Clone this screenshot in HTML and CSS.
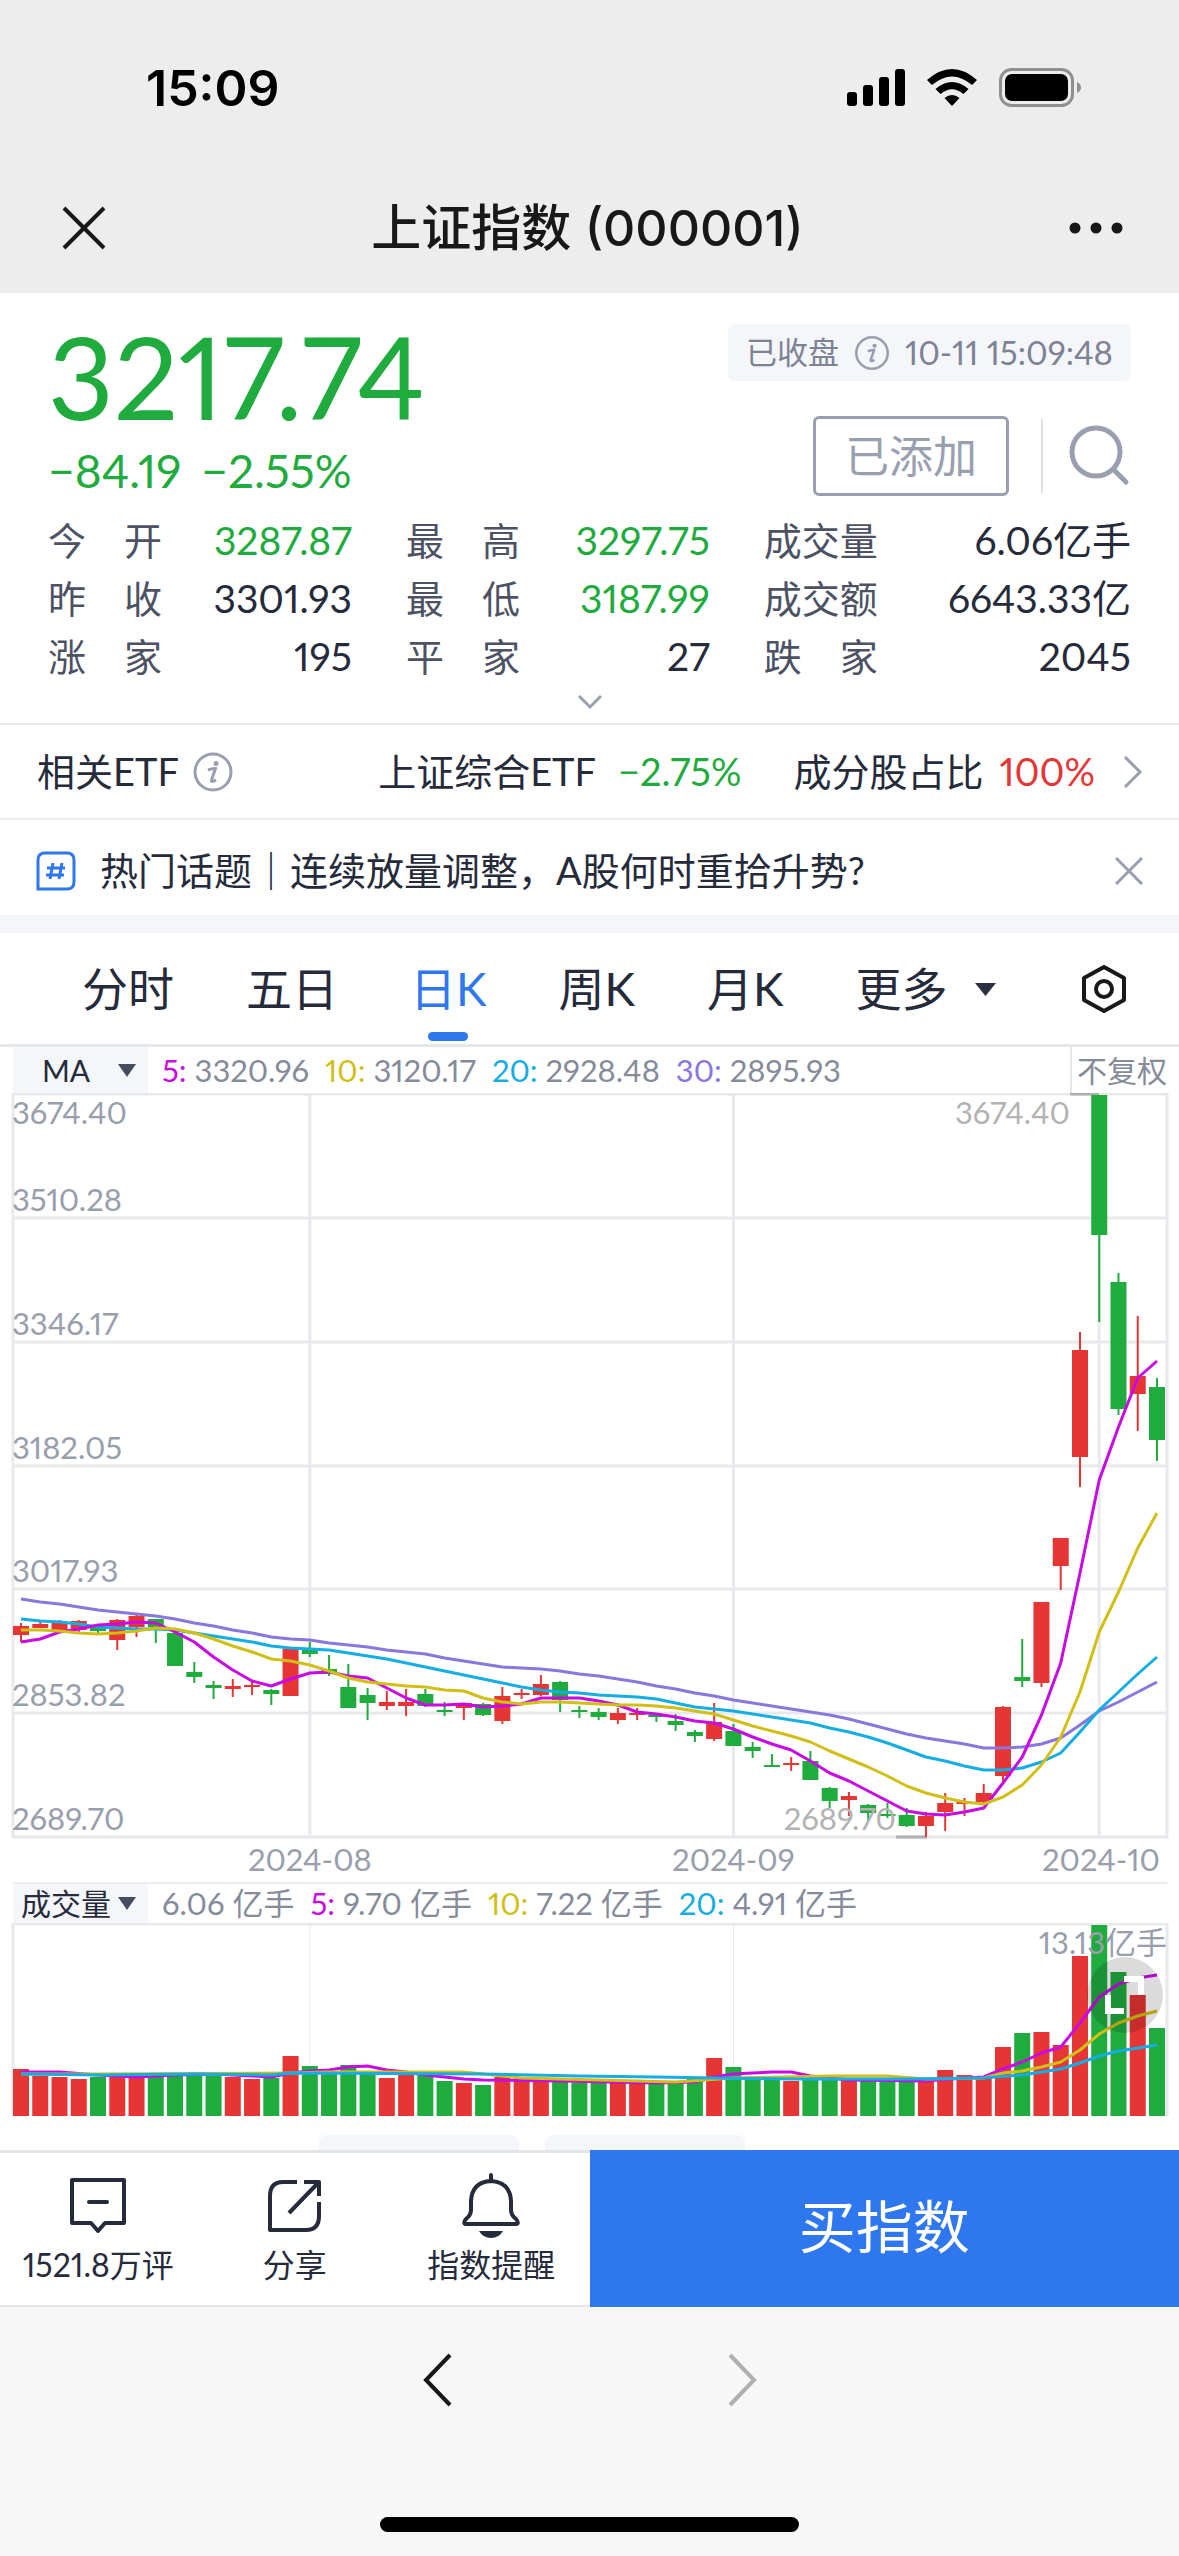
FILE: index.html
```html
<!DOCTYPE html>
<html lang="zh-CN">
<head>
<meta charset="utf-8">
<meta name="viewport" content="width=device-width, initial-scale=1">
<title>上证指数 (000001)</title>
<link rel="stylesheet" href="styles.css">
</head>
<body>
<header class="top">
  <div class="status">
    <span class="status-time">15:09</span>
    <div class="status-icons">
      <svg width="58" height="38" viewBox="0 0 58 38"><rect x="0" y="23" width="10" height="14" rx="3"/><rect x="16" y="16" width="10" height="21" rx="3"/><rect x="32" y="8" width="10" height="29" rx="3"/><rect x="48" y="0" width="10" height="37" rx="3"/></svg>
      <svg width="50" height="38" viewBox="0 0 50 38"><path d="M0 11Q25 -11 50 11L45 16Q25 -1 5 16Z"/><path d="M8.500 20Q25 6 41.500 20L36.500 25Q25 15.500 13.500 25Z"/><path d="M17.500 29Q25 23 32.500 29L25 37Z"/></svg>
      <svg width="82" height="40" viewBox="0 0 82 40"><rect x="1.500" y="1.500" width="72" height="36" rx="11" fill="none" stroke="#8f8f8f" stroke-width="3"/><rect x="6" y="6" width="63" height="27" rx="7"/><path d="M78 14Q82 16 82 19.500T78 25Z" fill="#8f8f8f"/></svg>
    </div>
  </div>
  <div class="nav">
    <button class="icon-btn" aria-label="关闭"><svg width="44" height="44" viewBox="0 0 44 44" class="stroke-dark"><path d="M2 2L42 42M42 2L2 42"/></svg></button>
    <h1 class="nav-title">上证指数 (000001)</h1>
    <button class="icon-btn" aria-label="更多操作"><svg width="54" height="12" viewBox="0 0 54 12" fill="#181818"><circle cx="6" cy="6" r="5.500"/><circle cx="27" cy="6" r="5.500"/><circle cx="48" cy="6" r="5.500"/></svg></button>
  </div>
</header>

<main class="page">
  <section class="quote">
    <div class="quote-head">
      <div>
        <div class="price">3217.74</div>
        <div class="change"><span>−84.19</span><span>−2.55%</span></div>
      </div>
      <div class="quote-side">
        <div class="market-state">
          <span>已收盘</span>
          <svg width="34" height="34" viewBox="0 0 40 40" class="info"><circle cx="20" cy="20" r="18.500"/><circle cx="23" cy="11.500" r="2.500" class="info-fill"/><path d="M15 18Q21 16 22.500 16.500L18.500 28Q18 31 23 28" /></svg>
          <time>10-11 15:09:48</time>
        </div>
        <div class="actions">
          <button class="added">已添加</button>
          <button class="search" aria-label="搜索"><svg width="62" height="62" viewBox="0 0 62 62"><circle cx="27" cy="27" r="24"/><path d="M45 45L57 57"/></svg></button>
        </div>
      </div>
    </div>
    <dl class="stats">
      <div><dt>今开</dt><dd class="down">3287.87</dd></div>
      <div><dt>最高</dt><dd class="down">3297.75</dd></div>
      <div><dt>成交量</dt><dd>6.06亿手</dd></div>
      <div><dt>昨收</dt><dd>3301.93</dd></div>
      <div><dt>最低</dt><dd class="down">3187.99</dd></div>
      <div><dt>成交额</dt><dd>6643.33亿</dd></div>
      <div><dt>涨家</dt><dd>195</dd></div>
      <div><dt>平家</dt><dd>27</dd></div>
      <div><dt>跌家</dt><dd>2045</dd></div>
    </dl>
    <button class="expand" aria-label="展开"><svg width="26" height="16" viewBox="0 0 26 16"><path d="M2 2L13 13L24 2"/></svg></button>
  </section>

  <a class="etf" href="#etf">
    <span class="etf-name">相关ETF</span>
    <svg width="40" height="40" viewBox="0 0 40 40" class="info"><circle cx="20" cy="20" r="18"/><circle cx="23" cy="11.500" r="2.500" class="info-fill"/><path d="M15 18Q21 16 22.500 16.500L18.500 28Q18 31 23 28"/></svg>
    <span class="etf-fund">上证综合ETF</span><span class="etf-change down">−2.75%</span>
    <span class="etf-share">成分股占比</span><span class="etf-pct up">100%</span>
    <svg width="20" height="34" viewBox="0 0 20 34" class="stroke-gray"><path d="M2 2L17 17L2 32"/></svg>
  </a>

  <div class="topic">
    <svg width="40" height="40" viewBox="0 0 40 40" class="hash"><path d="M9 2H31Q38 2 38 9V31Q38 38 31 38H2V9Q2 2 9 2Z"/><path d="M17 12L14 28M26 12L23 28M11 17H29M10 24H28"/></svg>
    <a class="topic-text" href="#topic">热门话题｜连续放量调整，A股何时重拾升势?</a>
    <button class="icon-btn" aria-label="关闭话题"><svg width="28" height="28" viewBox="0 0 28 28" class="stroke-gray"><path d="M1 1L27 27M27 1L1 27"/></svg></button>
  </div>

  <nav class="tabs" aria-label="周期">
    <button class="tab">分时</button>
    <button class="tab">五日</button>
    <button class="tab tab-on">日K</button>
    <button class="tab">周K</button>
    <button class="tab">月K</button>
    <button class="tab tab-more">更多<svg width="21" height="14" viewBox="0 0 21 14"><path d="M0 1H21L10.500 14Z" fill="#2a2f40"/></svg></button>
    <button class="icon-btn tab-settings" aria-label="设置"><svg width="46" height="48" viewBox="0 0 46 48" class="stroke-dark"><path d="M23 2L43 13V35L23 46L3 35V13Z" stroke-linejoin="round"/><circle cx="23" cy="24" r="8"/></svg></button>
  </nav>

  <section class="panel" aria-label="K线图">
    <div class="legend">
      <div class="picker"><select aria-label="主图指标"><option>MA</option></select><svg width="18" height="13" viewBox="0 0 18 13"><path d="M0 0H18L9 13Z"/></svg></div>
      <div class="legend-values">
        <span><b class="c5">5:</b> 3320.96</span><span><b class="c10">10:</b> 3120.17</span><span><b class="c20">20:</b> 2928.48</span><span><b class="c30">30:</b> 2895.93</span>
      </div>
      <button class="adjust">不复权</button>
    </div>
    <svg id="price" class="chart" viewBox="0 -1 1179 789" role="img" aria-label="日K线"></svg>
    <div class="legend legend-volume">
      <div class="picker"><select aria-label="副图指标"><option>成交量</option></select><svg width="18" height="13" viewBox="0 0 18 13"><path d="M0 0H18L9 13Z"/></svg></div>
      <div class="legend-values">
        <span>6.06 亿手</span><span><b class="c5">5:</b> 9.70 亿手</span><span><b class="c10">10:</b> 7.22 亿手</span><span><b class="c20">20:</b> 4.91 亿手</span>
      </div>
    </div>
    <div class="volume">
      <svg id="volume" class="chart" viewBox="0 -1 1179 194" role="img" aria-label="成交量"></svg>
      <button class="fullscreen" aria-label="全屏"><svg width="76" height="76" viewBox="0 0 76 76"><path d="M37 22H54V38M21 38V54H37"/></svg></button>
    </div>
    <div class="chips"><span></span><span></span></div>
  </section>
</main>

<footer>
  <div class="dock">
    <div class="dock-items">
      <button class="dock-item"><svg width="64" height="68" viewBox="0 0 64 68"><path d="M6 8H58V51H39L32 59L25 51H6Z"/><path d="M23 30H41" stroke-linecap="round"/></svg>1521.8万评</button>
      <button class="dock-item"><svg width="64" height="68" viewBox="0 0 64 68"><path d="M34 10H20Q7 10 7 24V58H43Q56 58 56 44V30M41 10H56V24M56 10L26 41" stroke-linecap="butt"/></svg>分享</button>
      <button class="dock-item"><svg width="64" height="68" viewBox="0 0 64 68"><path d="M32 3V9" stroke-linecap="round"/><path d="M32 9Q51 10 52 29V38Q52 43 57 47Q61 52 56 52H8Q3 52 7 47Q12 43 12 38V29Q13 10 32 9Z"/><path d="M20 59H44Q40 66 32 66T20 59Z" class="clapper"/></svg>指数提醒</button>
    </div>
    <button class="buy">买指数</button>
  </div>
  <div class="history">
    <button class="icon-btn" aria-label="后退"><svg width="30" height="54" viewBox="0 0 30 54" class="stroke-dark"><path d="M27 2L3 27L27 52"/></svg></button>
    <button class="icon-btn" aria-label="前进" disabled><svg width="30" height="54" viewBox="0 0 30 54" class="stroke-off"><path d="M3 2L27 27L3 52"/></svg></button>
  </div>
  <div class="home-bar"></div>
</footer>
<script src="chart.js"></script>
</body>
</html>
```
FILE: styles.css
```css
* { box-sizing: border-box; }

body {
  margin: 0;
  min-height: 100vh;
  display: flex;
  flex-direction: column;
  background: #f7f7f7;
  color: #262b3b;
  font-family: Lato, "Noto Sans CJK SC", sans-serif;
  font-size: 38px;
  font-variant-numeric: proportional-nums;
}

button, select {
  margin: 0;
  padding: 0;
  border: 0;
  background: none;
  color: inherit;
  font: inherit;
}
a { color: inherit; text-decoration: none; }
svg { display: block; flex: none; }

.icon-btn { display: flex; align-items: center; justify-content: center; }
.up { color: #e63535; }
.down { color: #1fab3e; }
.stroke-dark, .stroke-gray, .stroke-off { fill: none; stroke: #181818; stroke-width: 4; }
.stroke-gray { stroke: #9a9fb0; stroke-width: 3; }
.stroke-off { stroke: #b0b0b0; }

.top { background: #ededed; color: #000; font-family: Inter, "Noto Sans CJK SC", sans-serif; }
.status {
  display: flex;
  align-items: center;
  justify-content: space-between;
  padding: 58px 98px 44px 146px;
  font-size: 50px;
  font-weight: 600;
  line-height: 60px;
}
.status-icons { display: flex; align-items: center; gap: 22px; }
.nav {
  display: flex;
  align-items: center;
  justify-content: space-between;
  padding: 36px 56px 35px 62px;
  line-height: 60px;
}
.nav-title { margin: 0; font-size: 50px; font-weight: 500; color: #181818; }

.page { background: #fff; }

.quote { padding: 31px 48px 4px 48px; border-bottom: 2px solid #e9eaee; }
.quote-head { display: flex; justify-content: space-between; }
.price { color: #1fab3e; font-size: 114px; line-height: 104px; }
.change {
  display: flex;
  gap: 20px;
  margin-top: 18px;
  color: #1fab3e;
  font-size: 46px;
  line-height: 50px;
}
.quote-side { display: flex; flex-direction: column; align-items: flex-end; gap: 35px; }
.market-state {
  display: flex;
  align-items: center;
  gap: 16px;
  padding: 0 18px;
  border-radius: 6px;
  background: #f4f6fa;
  color: #7d8294;
  font-size: 31px;
  line-height: 57px;
}
.market-state time { font-size: 33px; }
.info { fill: none; stroke: #9a9fb0; stroke-width: 3; }
.info-fill { fill: #9a9fb0; stroke: none; }
.actions { display: flex; align-items: center; }
.added {
  width: 196px;
  height: 80px;
  border: 3px solid #9a9fb0;
  border-radius: 6px;
  color: #9a9fb0;
  font-size: 44px;
  line-height: 70px;
}
.search { margin-left: 32px; padding: 6px 0 6px 26px; border-left: 2px solid #dfe1e8; }
.search svg { fill: none; stroke: #9a9fb0; stroke-width: 5; stroke-linecap: round; }

.stats {
  display: grid;
  grid-template-columns: 303fr 303fr 366fr;
  column-gap: 54px;
  margin: 15px 0 0;
  font-size: 38px;
  line-height: 58px;
}
.stats div { display: flex; justify-content: space-between; }
.stats dt { width: 114px; color: #4c5264; text-align: justify; text-align-last: justify; }
.stats dd { margin: 0; font-size: 39px; }
.expand { display: flex; align-items: center; justify-content: center; width: 100%; height: 34px; }
.expand svg { fill: none; stroke: #9a9fb0; stroke-width: 3; }

.etf {
  display: flex;
  align-items: center;
  padding: 0 36px 0 37px;
  border-bottom: 2px solid #eceef2;
  line-height: 93px;
}
.etf-name { margin-right: 14px; }
.etf-fund { margin-left: auto; }
.etf-change { margin: 0 52px 0 22px; }
.etf-pct { margin: 0 28px 0 16px; }

.topic {
  display: flex;
  align-items: center;
  padding: 6px 36px 0;
  border-bottom: 18px solid #f5f6f9;
  line-height: 89px;
}
.hash { margin-right: 24px; fill: none; stroke: #2f77ee; stroke-width: 3; }
.topic-text { flex: 1; }

.tabs {
  display: flex;
  align-items: center;
  gap: 72px;
  padding: 0 52px 0 82px;
  border-bottom: 3px solid #e6e7ea;
  font-size: 46px;
  line-height: 111px;
}
.tab-on { position: relative; color: #2f77ee; }
.tab-on::after {
  content: "";
  position: absolute;
  left: calc(50% - 20px);
  bottom: 3px;
  width: 40px;
  height: 9px;
  border-radius: 5px;
  background: #2f77ee;
}
.tab-more { display: flex; align-items: center; gap: 28px; }
.tab-settings { margin-left: auto; }

.legend {
  display: flex;
  margin: 0 12px 0 13px;
  color: #868b9a;
  font-size: 31px;
  line-height: 46px;
}
.legend b { font-weight: 400; }
.picker { display: grid; align-items: center; width: 135px; background: #f4f6fa; color: #262b3b; font-size: 30px; }
.picker select {
  grid-area: 1 / 1;
  width: 100%;
  padding-right: 29px;
  appearance: none;
  text-align: center;
  text-align-last: center;
}
.picker svg { grid-area: 1 / 1; justify-self: end; margin-right: 12px; fill: #464d60; pointer-events: none; }
.legend-values { display: flex; flex: 1; gap: 16px; padding-left: 14px; white-space: pre; }
.c5 { color: #c80be3; }
.c10 { color: #d2bf16; }
.c20 { color: #14ade4; }
.c30 { color: #8a76dd; }
.adjust { padding-left: 5px; border-left: 2px solid #e6e7ea; font-size: 30px; }
.legend-volume { border-top: 2px solid #ecedf0; line-height: 39px; }

.chart { width: 100%; height: auto; }
.grid { fill: none; stroke: #e8e9ec; stroke-width: 3; }
.thin { stroke-width: 1; }
.mark { stroke: #b0b0b0; stroke-width: 3; }
.rise { fill: #e63535; stroke: #e63535; }
.fall { fill: #1fab3e; stroke: #1fab3e; }
.bar { stroke: none; }
.wick { fill: none; stroke-width: 2; }
.ma { fill: none; stroke-width: 3; stroke: currentColor; stroke-linejoin: round; }
.axis { fill: #999eac; font-size: 31px; }
.peak { fill: #b3b3b3; }

.volume { position: relative; }
.fullscreen {
  position: absolute;
  right: 16px;
  bottom: 84px;
  border-radius: 50%;
  background: rgba(0, 0, 0, 0.14);
}
.fullscreen svg { fill: none; stroke: #fff; stroke-width: 6; }
.chips { display: flex; justify-content: center; gap: 26px; padding: 18px 116px 0 0; }
.chips span { width: 200px; height: 15px; border-radius: 8px 8px 0 0; background: #f5f6f9; }

.dock { display: flex; color: #262b3b; }
.dock-items {
  display: flex;
  flex: 1;
  border-top: 3px solid #e3e4e6;
  border-bottom: 2px solid #e6e6e6;
  background: #fff;
}
.dock-item {
  display: flex;
  flex: 1 1 0;
  flex-direction: column;
  align-items: center;
  gap: 4px;
  padding: 19px 0;
  font-size: 32px;
  line-height: 42px;
  white-space: nowrap;
}
.dock-item svg { fill: none; stroke: #262b3b; stroke-width: 4; stroke-linejoin: round; }
.dock-item .clapper { fill: #262b3b; stroke: none; }
.buy { flex: 1; padding-bottom: 12px; background: #2f77ee; color: #fff; font-size: 57px; }
.history { display: flex; justify-content: center; gap: 274px; padding: 46px 0; }
.home-bar { width: 419px; height: 15px; margin: 64px auto 24px; border-radius: 8px; background: #000; }
```
FILE: chart.js
```js
// One slot per trading day; candles are [rise, body top, body bottom, high, low].
const FIRST = 21;
const STEP = 1136 / 59;
const x = (i) => FIRST + i * STEP;

const candles = [
  [1,532,541,529,548],[1,530,534,528,534],[1,529,537,526,539],[1,527,536,526,538],[0,533,537,532,540],
  [1,526,546,525,556],[1,522,533,521,543],[0,525,533,525,549],[0,539,572,538,572],[0,578,583,568,589],
  [0,591,594,587,605],[1,592,595,585,603],[1,591,592,587,601],[0,596,600,595,611],[1,555,602,554,602],
  [0,555,560,548,563],[0,575,580,561,582],[0,593,614,570,614],[0,601,609,594,626],[1,608,612,597,616],
  [1,608,612,595,622],[0,600,612,595,613],[0,616,617,608,622],[1,609,614,609,626],[0,610,621,609,622],
  [1,602,627,593,630],[1,599,600,595,605],[1,590,601,581,602],[0,588,606,587,618],[0,616,617,612,624],
  [0,618,623,614,626],[1,619,626,614,630],[1,619,620,614,626],[0,621,622,620,628],[0,627,631,620,637],
  [0,638,642,636,648],[1,628,645,609,647],[0,637,652,630,652],[0,653,657,648,664],[0,671,672,660,673],
  [1,669,670,663,677],[0,667,686,657,686],[0,694,707,693,714],[1,702,706,698,722],[0,711,719,710,727],
  [0,720,722,709,724],[0,721,732,714,733],[1,722,732,718,743],[1,709,718,699,737],[1,708,710,704,722],
  [1,699,708,690,709],[1,613,682,612,687],[0,583,587,545,593],[1,508,589,508,593],[1,444,472,444,496],
  [1,256,363,238,393],[0,1,141,1,228],[0,188,315,179,321],[1,282,300,222,337],[0,293,346,284,367]
];
const averages = {
  c30: [505,508,510,513,516,518,520,522,525,529,532,536,539,543,545,546,549,551,553,556,558,560,564,567,570,573,574,575,577,580,582,585,588,592,595,599,602,606,609,612,615,618,621,625,630,635,640,644,647,650,654,654,653,650,644,631,617,608,598,588],
  c20: [525,527,528,530,533,534,535,535,536,539,542,545,548,552,554,555,556,559,562,565,569,573,577,581,585,589,593,596,598,599,601,602,603,605,609,613,615,617,620,623,626,629,634,638,643,649,656,663,667,672,676,676,674,668,659,638,616,598,580,563],
  c5: [548,545,538,535,531,530,528,529,538,548,563,576,587,592,585,579,578,582,584,594,604,611,611,610,613,612,610,604,604,604,607,611,618,620,623,627,629,635,643,650,656,667,679,687,697,707,717,720,721,718,714,689,663,621,569,479,386,333,284,267],
  c10: [536,536,537,539,540,539,537,534,535,539,545,552,558,565,567,571,577,584,588,590,592,593,596,597,604,608,610,608,608,609,610,611,611,612,614,617,620,626,632,637,642,648,657,665,673,682,692,699,704,708,710,703,691,671,643,598,538,498,454,419]
};
const volumes = [
  47,40,39,37,39,40,39,40,41,44,40,39,37,38,60,50,42,51,42,38,41,42,35,33,31,39,38,37,36,33,
  35,33,33,32,33,39,58,49,37,37,35,37,37,36,35,35,35,36,46,41,38,69,83,84,71,160,191,144,121,88
];
const volumeAverages = {
  c5: [[0,44],[2,44],[4,41],[6,39],[8,41],[10,42],[12,40],[13,39],[14,43],[15,45],[16,46],[17,49],[18,50],[19,46],[20,44],[21,41],[22,39],[23,37],[24,36],[28,35],[33,33],[35,34],[36,39],[37,42],[38,43],[39,44],[40,44],[41,40],[43,36],[47,35],[49,38],[50,39],[51,47],[52,54],[53,63],[54,69],[55,93],[56,119],[57,132],[58,138],[59,141]],
  c10: [[0,42],[4,42],[14,43],[16,44],[23,44],[24,42],[26,38],[28,37],[34,34],[37,38],[42,40],[45,40],[47,37],[50,38],[51,43],[52,45],[53,49],[54,54],[55,66],[56,82],[57,93],[58,100],[59,105]],
  c20: [[0,42],[4,41],[9,42],[13,41],[14,43],[24,42],[29,40],[33,39],[36,38],[40,37],[46,37],[50,38],[52,41],[54,47],[55,53],[56,60],[57,65],[58,68],[59,71]]
};
const months = [[15, "2024-08"], [37, "2024-09"], [56, "2024-10"]];
const prices = ["3510.28", "3346.17", "3182.05", "3017.93", "2853.82", "2689.70"];

const side = (rise) => (rise ? "rise" : "fall");
const line = (name, pts) => `<polyline class="ma ${name}" points="${pts.map(([i, y]) => `${x(i)},${y}`).join(" ")}"/>`;

let out = '<rect class="grid" x="13" y="0" width="1154" height="743"/>';
prices.forEach((p, n) => {
  const y = Math.round((n + 1) * 743 / 6);
  out += `<path class="grid" d="M13 ${y}H1167"/>`;
});
months.forEach(([i]) => { out += `<path class="grid" d="M${x(i)} 0V743"/>`; });
out += '<path class="mark" d="M1070 0H1099M896 743H927"/>';
candles.forEach(([rise, top, bottom, high, low], i) => {
  out += `<path class="wick ${side(rise)}" d="M${x(i)} ${high}V${low}"/>`;
  out += `<rect class="${side(rise)} bar" x="${x(i) - 8}" y="${top}" width="16" height="${Math.max(2, bottom - top)}"/>`;
});
Object.entries(averages).forEach(([name, ys]) => { out += line(name, ys.map((y, i) => [i, y])); });
out += '<text class="axis" x="12" y="30">3674.40</text>';
prices.forEach((p, n) => {
  out += `<text class="axis" x="12" y="${Math.round((n + 1) * 743 / 6) - 7}">${p}</text>`;
});
out += '<text class="axis peak" x="1070" y="30" text-anchor="end">3674.40</text>';
out += '<text class="axis peak" x="896" y="736" text-anchor="end">2689.70</text>';
months.forEach(([i, label]) => {
  out += i === 56
    ? `<text class="axis" x="1160" y="777" text-anchor="end">${label}</text>`
    : `<text class="axis" x="${x(i)}" y="777" text-anchor="middle">${label}</text>`;
});
document.getElementById("price").innerHTML = out;

out = '<path class="grid" d="M13 192V0H1167V192"/>';
months.forEach(([i]) => { out += `<path class="grid thin" d="M${x(i)} 0V192"/>`; });
volumes.forEach((v, i) => {
  out += `<rect class="${side(candles[i][0])} bar" x="${x(i) - 8}" y="${192 - v}" width="16" height="${v}"/>`;
});
Object.entries(volumeAverages).forEach(([name, pts]) => { out += line(name, pts.map(([i, h]) => [i, 192 - h])); });
out += '<text class="axis" x="1167" y="30" text-anchor="end">13.13亿手</text>';
document.getElementById("volume").innerHTML = out;
```
